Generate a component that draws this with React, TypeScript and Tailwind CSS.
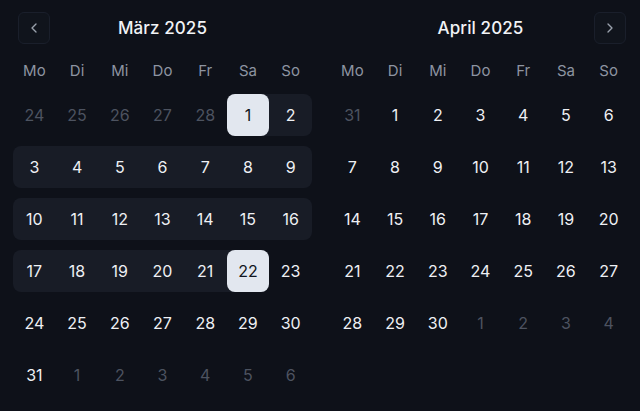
import React from "react";
import { ChevronLeft, ChevronRight } from "lucide-react";

type Day = { n: number; out?: boolean };

const wd = ["Mo", "Di", "Mi", "Do", "Fr", "Sa", "So"];

function march(): Day[][] {
  const days: Day[] = [];
  [24, 25, 26, 27, 28].forEach((n) => days.push({ n, out: true }));
  for (let i = 1; i <= 31; i++) days.push({ n: i });
  [1, 2, 3, 4, 5, 6].forEach((n) => days.push({ n, out: true }));
  const rows: Day[][] = [];
  for (let i = 0; i < 6; i++) rows.push(days.slice(i * 7, i * 7 + 7));
  return rows;
}

function april(): Day[][] {
  const days: Day[] = [{ n: 31, out: true }];
  for (let i = 1; i <= 30; i++) days.push({ n: i });
  [1, 2, 3, 4].forEach((n) => days.push({ n, out: true }));
  const rows: Day[][] = [];
  for (let i = 0; i < 5; i++) rows.push(days.slice(i * 7, i * 7 + 7));
  return rows;
}

function inRange(month: "m" | "a", n: number, out?: boolean) {
  return month === "m" && !out && n >= 1 && n <= 22;
}

function Month({ title, rows, month, nav }: { title: string; rows: Day[][]; month: "m" | "a"; nav: "left" | "right" }) {
  return (
    <div className="w-[299px] flex flex-col">
      <div className="relative h-8 flex items-center justify-center">
        {nav === "left" && (
          <button className="absolute left-[5px] top-0 w-8 h-8 rounded-md border border-[#1a1f2b] bg-[#10141c] flex items-center justify-center text-[#9aa1ad]">
            <ChevronLeft size={16} strokeWidth={2} />
          </button>
        )}
        <span className="text-[17px] font-medium text-[#f1f3f6] tracking-[0.1px] pt-[2px]">{title}</span>
        {nav === "right" && (
          <button className="absolute right-[4px] top-0 w-8 h-8 rounded-md border border-[#1a1f2b] bg-[#10141c] flex items-center justify-center text-[#9aa1ad]">
            <ChevronRight size={16} strokeWidth={2} />
          </button>
        )}
      </div>
      <div className="grid grid-cols-7 mt-[17px] h-5 items-center">
        {wd.map((d) => (
          <div key={d} className="text-center text-[15px] text-[#8d94a1] leading-5">
            {d}
          </div>
        ))}
      </div>
      <div className="flex flex-col gap-[10px] mt-[13px]">
        {rows.map((row, ri) => (
          <div key={ri} className="grid grid-cols-7 h-[42px]">
            {row.map((d, ci) => {
              const r = inRange(month, d.n, d.out);
              const prevR = ci > 0 && inRange(month, row[ci - 1].n, row[ci - 1].out);
              const nextR = ci < 6 && inRange(month, row[ci + 1].n, row[ci + 1].out);
              const sel = month === "m" && !d.out && (d.n === 1 || d.n === 22);
              const band = r
                ? `bg-[#181c26] ${!prevR ? "rounded-l-lg" : ""} ${!nextR ? "rounded-r-lg" : ""}`
                : "";
              return (
                <div key={ci} className={`h-[42px] ${band}`}>
                  <div
                    className={`h-full w-full flex items-center justify-center text-[16px] ${
                      sel
                        ? "bg-[#e2e7ef] text-[#111520] rounded-lg"
                        : d.out
                        ? "text-[#4d5360]"
                        : "text-[#eef0f4]"
                    }`}
                  >
                    {d.n}
                  </div>
                </div>
              );
            })}
          </div>
        ))}
      </div>
    </div>
  );
}

export default function App() {
  return (
    <div
      className="w-[640px] h-[411px] bg-[#0e1119] overflow-hidden"
      style={{ fontFamily: "Inter, 'Noto Sans', sans-serif" }}
    >
      <div className="flex pl-[13px] pt-3 gap-[19px]">
        <Month title="März 2025" rows={march()} month="m" nav="left" />
        <Month title="April 2025" rows={april()} month="a" nav="right" />
      </div>
    </div>
  );
}
